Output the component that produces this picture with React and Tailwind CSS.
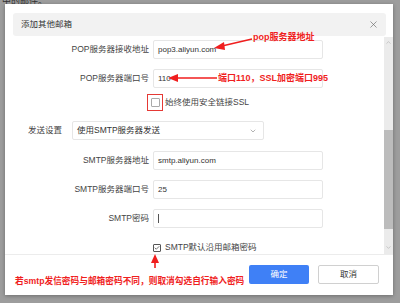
import { X, ChevronDown, ChevronUp, Check } from "lucide-react";

const font = { fontFamily: '"Liberation Sans", "Noto Sans CJK SC", sans-serif' };

const Field = ({ label, value, mt, cursor }) => (
  <div className={`flex items-center h-[19px] ${mt}`}>
    <div className="w-[145px] text-right text-[8.5px] text-[#444] pr-[1px]">{label}</div>
    <div className="ml-[3px] w-[170px] h-full border border-[#e6e6e6] rounded-[2px] flex items-center pl-[4px] text-[8px] text-[#333]">
      {value}
      {cursor && <span className="w-px h-[9px] bg-[#555]" />}
    </div>
  </div>
);

export default function App() {
  return (
    <div className="relative w-[400px] h-[303px] bg-[#9d9d9d] overflow-hidden" style={font}>
      <div className="absolute top-[-5px] left-[2px] text-[9px] text-[#333]">中的邮件。</div>

      <div className="absolute left-[5px] top-[4px] w-[388px] h-[291px] bg-white shadow-[0_1px_4px_rgba(0,0,0,0.3)] flex flex-col">
        {/* header */}
        <div className="mt-[9px] ml-[8px] mr-[7px] h-[23px] bg-[#f2f2f2] rounded-[3px] flex items-center justify-between pl-[8px] pr-[7px]">
          <span className="text-[8.5px] text-[#333]">添加其他邮箱</span>
          <X size={11} strokeWidth={1.4} className="text-[#666]" />
        </div>

        {/* body */}
        <div className="relative mt-[1px] h-[218px] flex border-b border-[#ececec]">
          <div className="flex-1 flex flex-col">
            <Field label="POP服务器接收地址" value="pop3.aliyun.com" mt="mt-[3px]" />
            <Field label="POP服务器端口号" value="110" mt="mt-[10px]" />

            <div className="mt-[6px] h-[17px] flex items-center">
              <div className="ml-[142px] w-[16px] h-[17px] border border-[#e53935] flex items-center justify-center">
                <div className="w-[9px] h-[9px] border border-[#aaa] rounded-[1px]" />
              </div>
              <span className="ml-[2px] text-[8.5px] text-[#444]">始终使用安全链接SSL</span>
            </div>

            <div className="mt-[10px] h-[19px] flex items-center">
              <div className="ml-[23px] w-[44px] text-[8.5px] text-[#444]">发送设置</div>
              <div className="w-[192px] h-full border border-[#e6e6e6] rounded-[2px] flex items-center justify-between pl-[4px] pr-[6px] text-[8.5px] text-[#333]">
                使用SMTP服务器发送
                <ChevronDown size={8} strokeWidth={1.5} className="text-[#666]" />
              </div>
            </div>

            <Field label="SMTP服务器地址" value="smtp.aliyun.com" mt="mt-[11px]" />
            <Field label="SMTP服务器端口号" value="25" mt="mt-[10px]" />
            <Field label="SMTP密码" value="" cursor mt="mt-[10px]" />

            <div className="mt-[15px] h-[9px] flex items-center">
              <div className="ml-[148px] w-[8px] h-[8px] border border-[#555] rounded-[1px] flex items-center justify-center">
                <Check size={6} strokeWidth={3} className="text-[#444]" />
              </div>
              <span className="ml-[4px] text-[8.5px] text-[#444]">SMTP默认沿用邮箱密码</span>
            </div>
          </div>

          {/* scrollbar */}
          <div className="w-[9px] h-full bg-[#ebebeb] flex flex-col items-center">
            <ChevronUp size={7} strokeWidth={1.5} className="mt-[2px] text-[#999]" />
            <div className="mt-[84px] w-full h-[99px] bg-[#bcbcbc]" />
            <ChevronDown size={7} strokeWidth={1.5} className="mt-[15px] text-[#999]" />
          </div>
        </div>

        {/* footer */}
        <div className="flex-1 flex items-start">
          <div className="mt-[20px] ml-[10px] text-[8.7px] font-bold text-[#f01e1e] w-[234px] whitespace-nowrap">
            若smtp发信密码与邮箱密码不同，则取消勾选自行输入密码
          </div>
          <div className="mt-[10px] w-[60px] h-[19px] bg-[#3f80f6] rounded-[2px] flex items-center justify-center text-[8.5px] text-white">
            确定
          </div>
          <div className="mt-[10px] ml-[9px] w-[61px] h-[19px] border border-[#d0d0d0] rounded-[2px] flex items-center justify-center text-[8.5px] text-[#333]">
            取消
          </div>
        </div>
      </div>

      {/* annotations */}
      <div className="absolute left-[253px] top-[31px] text-[9px] font-bold text-[#f01e1e] whitespace-nowrap">pop服务器地址</div>
      <div className="absolute left-[218px] top-[72px] text-[9px] font-bold text-[#f01e1e] whitespace-nowrap">端口110，SSL加密端口995</div>
      <svg className="absolute left-0 top-0" width="400" height="303" viewBox="0 0 400 303">
        <g stroke="#f01e1e" strokeWidth="1.6" fill="#f01e1e">
          <line x1="252" y1="39" x2="222" y2="46" />
          <polygon points="214,48 224,42 225,50" stroke="none" />
          <line x1="217" y1="78" x2="176" y2="78" />
          <polygon points="168,78 178,74 178,82" stroke="none" />
          <line x1="155" y1="268" x2="155" y2="262" />
          <polygon points="155,254 151,263 159,263" stroke="none" />
        </g>
      </svg>
    </div>
  );
}
